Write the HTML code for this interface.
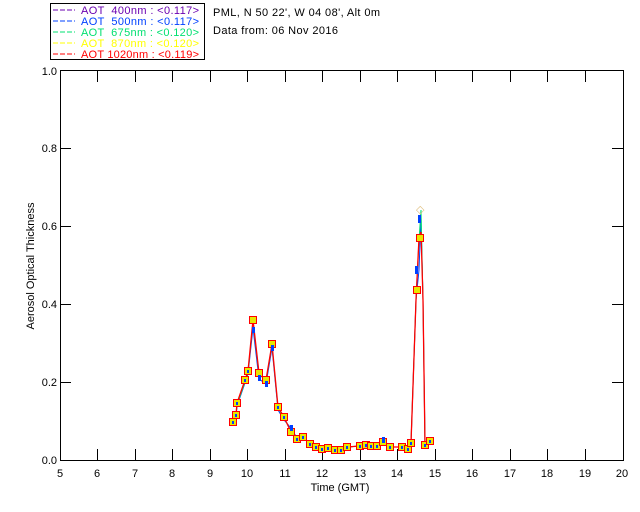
<!DOCTYPE html>
<html><head><style>
html,body{margin:0;padding:0;background:#fff;width:640px;height:512px;overflow:hidden}
svg text{font-family:"Liberation Sans",sans-serif;font-size:11px;white-space:pre}
</style></head><body>
<svg width="640" height="512" viewBox="0 0 640 512" xmlns="http://www.w3.org/2000/svg" shape-rendering="crispEdges">
<rect width="640" height="512" fill="#fff"/>
<rect x="50.5" y="3.5" width="154" height="56" fill="none" stroke="#000"/>
<g font-size="11">
<line x1="53" y1="10" x2="75" y2="10" stroke="#6a00b0" stroke-dasharray="5,2"/>
<text x="81" y="14" fill="#6a00b0" textLength="118" lengthAdjust="spacing">AOT  400nm : &lt;0.117&gt;</text>
<line x1="53" y1="21" x2="75" y2="21" stroke="#0040ff" stroke-dasharray="5,2"/>
<text x="81" y="25" fill="#0040ff" textLength="118" lengthAdjust="spacing">AOT  500nm : &lt;0.117&gt;</text>
<line x1="53" y1="32" x2="75" y2="32" stroke="#00e070" stroke-dasharray="5,2"/>
<text x="81" y="36" fill="#00e070" textLength="118" lengthAdjust="spacing">AOT  675nm : &lt;0.120&gt;</text>
<line x1="53" y1="43" x2="75" y2="43" stroke="#ffff00" stroke-dasharray="5,2"/>
<text x="81" y="47" fill="#ffff00" textLength="118" lengthAdjust="spacing">AOT  870nm : &lt;0.120&gt;</text>
<line x1="53" y1="54" x2="75" y2="54" stroke="#ff0000" stroke-dasharray="5,2"/>
<text x="81" y="58" fill="#ff0000" textLength="118" lengthAdjust="spacing">AOT 1020nm : &lt;0.119&gt;</text>
</g>
<text x="213" y="16" textLength="167" lengthAdjust="spacing">PML, N 50 22', W 04 08', Alt 0m</text>
<text x="213" y="34" textLength="125" lengthAdjust="spacing">Data from: 06 Nov 2016</text>
<rect x="60.5" y="70.5" width="563" height="390" fill="none" stroke="#000"/>
<g stroke="#000">
<path d="M60 382.5h11M60 304.5h11M60 226.5h11M60 148.5h11M623 382.5h-11M623 304.5h-11M623 226.5h-11M623 148.5h-11"/>
<path d="M97.5 460v-11M135.5 460v-11M172.5 460v-11M210.5 460v-11M247.5 460v-11M285.5 460v-11M322.5 460v-11M360.5 460v-11M397.5 460v-11M435.5 460v-11M472.5 460v-11M510.5 460v-11M547.5 460v-11M585.5 460v-11"/>
<path d="M97.5 71v11M135.5 71v11M172.5 71v11M210.5 71v11M247.5 71v11M285.5 71v11M322.5 71v11M360.5 71v11M397.5 71v11M435.5 71v11M472.5 71v11M510.5 71v11M547.5 71v11M585.5 71v11"/>
</g>
<g text-anchor="end">
<text x="57" y="464">0.0</text><text x="57" y="386">0.2</text><text x="57" y="308">0.4</text>
<text x="57" y="230">0.6</text><text x="57" y="152">0.8</text><text x="57" y="75">1.0</text>
</g>
<g text-anchor="middle">
<text x="60" y="477">5</text><text x="97" y="477">6</text><text x="135" y="477">7</text><text x="172" y="477">8</text>
<text x="210" y="477">9</text><text x="247" y="477">10</text><text x="285" y="477">11</text><text x="322" y="477">12</text>
<text x="360" y="477">13</text><text x="397" y="477">14</text><text x="435" y="477">15</text><text x="472" y="477">16</text>
<text x="510" y="477">17</text><text x="547" y="477">18</text><text x="585" y="477">19</text><text x="622" y="477">20</text>
<text x="340" y="491">Time (GMT)</text>
</g>
<text transform="translate(34,266) rotate(-90)" text-anchor="middle" font-size="10">Aerosol Optical Thickness</text>
<g fill="none" shape-rendering="auto">
<polyline stroke="#0040ff" stroke-width="1" points="233,424 236,417 237,406 245,383 248,374 253,328 259,379 266,384 272,348 278,410 284,420 291,428 297,438 303,437 310,444 316,447 322,449 328,448 335,450 341,450 347,447 360,446 366,445 371,446 377,446 383,439 390,447 402,447 408,449 411,443 416,300 419,270 421,218 423,300 425,445 430,441"/>
<polyline stroke="#00e070" stroke-width="1" points="233,423 236,416 237,405 245,382 248,373 253,322 259,374 266,381 272,345 278,408 284,418 291,431 297,439 303,437 310,444 316,447 322,449 328,448 335,450 341,450 347,447 360,446 366,445 371,446 377,446 383,442 390,447 402,447 408,449 411,443 416,300 419,240 421,210 423,300 425,445 430,441"/>
<polyline stroke="#ff0000" stroke-width="1.3" points="233,422 236,415 237,403 245,380 248,371 253,320 259,373 266,380 272,344 278,407 284,417 291,432 297,439 303,437 310,444 316,447 322,449 328,448 335,450 341,450 347,447 360,446 366,445 371,446 377,446 383,442 390,447 402,447 408,449 411,443 416,300 419,238 421,232 423,300 425,445 430,441"/>
</g>
<g stroke="#ff0000" fill="#e8e800" stroke-width="1">
<rect x="229.5" y="418.5" width="7" height="7"/><rect x="232.5" y="411.5" width="7" height="7"/><rect x="233.5" y="399.5" width="7" height="7"/>
<rect x="241.5" y="376.5" width="7" height="7"/><rect x="244.5" y="367.5" width="7" height="7"/><rect x="249.5" y="316.5" width="7" height="7"/>
<rect x="255.5" y="369.5" width="7" height="7"/><rect x="262.5" y="376.5" width="7" height="7"/><rect x="268.5" y="340.5" width="7" height="7"/>
<rect x="274.5" y="403.5" width="7" height="7"/><rect x="280.5" y="413.5" width="7" height="7"/><rect x="287.5" y="428.5" width="7" height="7"/>
<rect x="293.5" y="435.5" width="7" height="7"/><rect x="299.5" y="433.5" width="7" height="7"/><rect x="306.5" y="440.5" width="7" height="7"/>
<rect x="312.5" y="443.5" width="7" height="7"/><rect x="318.5" y="445.5" width="7" height="7"/><rect x="324.5" y="444.5" width="7" height="7"/>
<rect x="331.5" y="446.5" width="7" height="7"/><rect x="337.5" y="446.5" width="7" height="7"/><rect x="343.5" y="443.5" width="7" height="7"/>
<rect x="356.5" y="442.5" width="7" height="7"/><rect x="362.5" y="441.5" width="7" height="7"/><rect x="367.5" y="442.5" width="7" height="7"/>
<rect x="373.5" y="442.5" width="7" height="7"/><rect x="379.5" y="438.5" width="7" height="7"/><rect x="386.5" y="443.5" width="7" height="7"/>
<rect x="398.5" y="443.5" width="7" height="7"/><rect x="404.5" y="445.5" width="7" height="7"/><rect x="407.5" y="439.5" width="7" height="7"/>
<rect x="413.5" y="286.5" width="7" height="7"/><rect x="416.5" y="234.5" width="7" height="7"/>
<rect x="421.5" y="441.5" width="7" height="7"/><rect x="426.5" y="437.5" width="7" height="7"/>
</g>
<g fill="#0040ff">
<rect x="232" y="421" width="2" height="3"/><rect x="235" y="414" width="2" height="3"/><rect x="236" y="402" width="2" height="3"/>
<rect x="244" y="379" width="2" height="3"/><rect x="247" y="370" width="2" height="3"/><rect x="252" y="327" width="3" height="6"/>
<rect x="258" y="375" width="3" height="6"/><rect x="265" y="381" width="3" height="6"/><rect x="271" y="345" width="3" height="6"/>
<rect x="277" y="406" width="2" height="3"/><rect x="283" y="416" width="2" height="3"/><rect x="290" y="425" width="3" height="6"/>
<rect x="296" y="438" width="2" height="3"/><rect x="302" y="436" width="2" height="3"/><rect x="309" y="443" width="2" height="3"/>
<rect x="315" y="446" width="2" height="3"/><rect x="321" y="448" width="2" height="3"/><rect x="327" y="447" width="2" height="3"/>
<rect x="334" y="449" width="2" height="3"/><rect x="340" y="449" width="2" height="3"/><rect x="346" y="446" width="2" height="3"/>
<rect x="359" y="445" width="2" height="3"/><rect x="365" y="444" width="2" height="3"/><rect x="370" y="445" width="2" height="3"/>
<rect x="376" y="445" width="2" height="3"/><rect x="382" y="437" width="3" height="6"/><rect x="389" y="446" width="2" height="3"/>
<rect x="401" y="446" width="2" height="3"/><rect x="407" y="448" width="2" height="3"/><rect x="410" y="442" width="2" height="3"/>
<rect x="415" y="266" width="3" height="8"/><rect x="418" y="215" width="3" height="8"/>
<rect x="424" y="444" width="2" height="3"/><rect x="429" y="440" width="2" height="3"/>
</g>
<text x="416" y="213" font-size="8" fill="#e0c080">◇</text>
</svg>
</body></html>
